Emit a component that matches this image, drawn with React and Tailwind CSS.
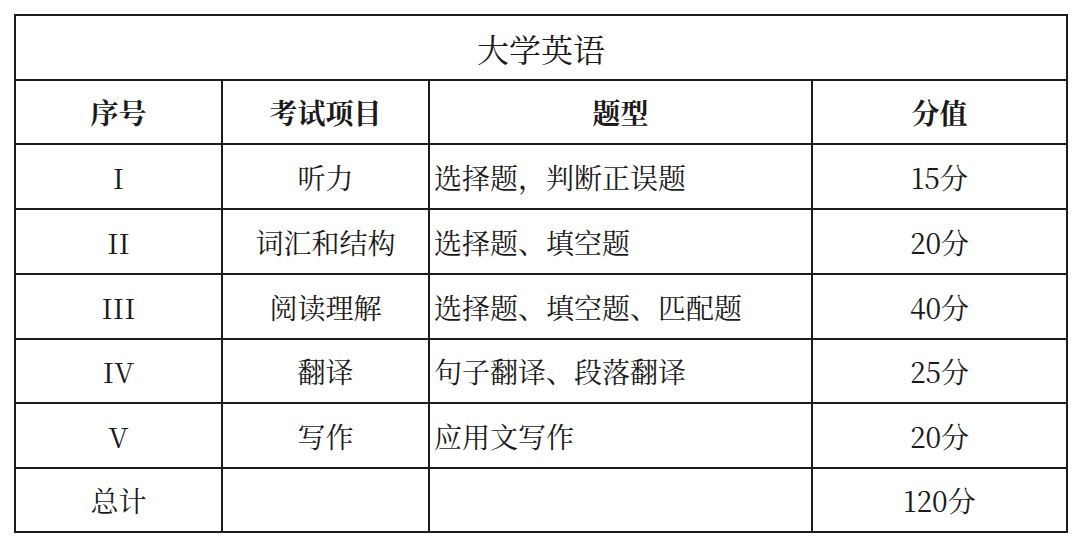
export default function App() {
  const rows = [
    ["I", "听力", "选择题，判断正误题", "15分", "h-[65px]"],
    ["II", "词汇和结构", "选择题、填空题", "20分", "h-[65px]"],
    ["III", "阅读理解", "选择题、填空题、匹配题", "40分", "h-[65px]"],
    ["IV", "翻译", "句子翻译、段落翻译", "25分", "h-[64px]"],
    ["V", "写作", "应用文写作", "20分", "h-[65px]"],
    ["总计", "", "", "120分", "h-[64px]"],
  ];

  const cell = "border-2 border-[#1c1c1c] p-0";

  return (
    <div
      className="w-[1080px] h-[546px] bg-white pt-[14px] pl-[14px] text-[#1a1a1a]"
      style={{ fontFamily: '"Noto Serif CJK SC", "Liberation Serif", "Noto Sans CJK SC", serif' }}
    >
      <table className="border-collapse table-fixed w-[1052px] text-[28px]">
        <colgroup>
          <col className="w-[207px]" />
          <col className="w-[207px]" />
          <col className="w-[383px]" />
          <col className="w-[255px]" />
        </colgroup>
        <thead>
          <tr className="h-[65px]">
            <th colSpan={4} className={`${cell} text-[32px] font-normal text-center`}>
              大学英语
            </th>
          </tr>
          <tr className="h-[64px]">
            <th className={`${cell} font-bold text-center`}>序号</th>
            <th className={`${cell} font-bold text-center`}>考试项目</th>
            <th className={`${cell} font-bold text-center`}>题型</th>
            <th className={`${cell} font-bold text-center`}>分值</th>
          </tr>
        </thead>
        <tbody>
          {rows.map((r, i) => (
            <tr key={i} className={r[4]}>
              <td className={`${cell} text-center`}>{r[0]}</td>
              <td className={`${cell} text-center`}>{r[1]}</td>
              <td className={`${cell} text-left pl-[4px]`}>{r[2]}</td>
              <td className={`${cell} text-center`}>{r[3]}</td>
            </tr>
          ))}
        </tbody>
      </table>
    </div>
  );
}
